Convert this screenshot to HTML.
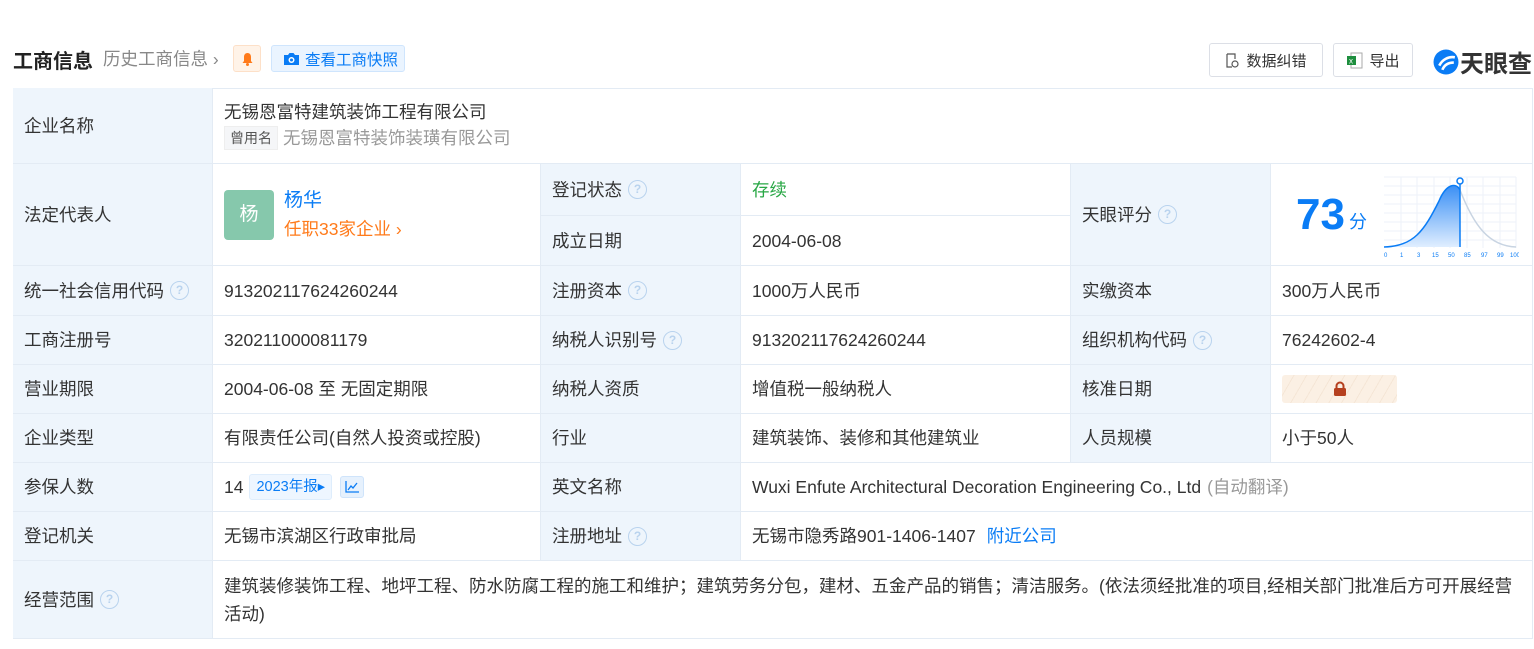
<!DOCTYPE html>
<html><head><meta charset="utf-8"><style>
*{margin:0;padding:0;box-sizing:border-box}
body{width:1534px;height:649px;background:#fff;font-family:"Liberation Sans","Noto Sans CJK SC",sans-serif;color:#333;position:relative;overflow:hidden}
.c{position:absolute;border-right:1px solid #e3ebf4;border-bottom:1px solid #e3ebf4;font-size:17.5px;line-height:22px;display:flex;align-items:center;padding-left:11px;white-space:nowrap}
.c>span,.c>div{line-height:22px}
.l{background:#eef5fc}
.q{display:inline-block;width:19px;height:19px;border:1.5px solid #b9d3ee;border-radius:50%;color:#b9d3ee;font-size:12px;text-align:center;line-height:16px!important;margin-left:6px;font-weight:bold}
.btn{position:absolute;top:43px;height:34px;border:1px solid #dcdfe6;border-radius:3px;font-size:15px;display:flex;align-items:center;justify-content:center;color:#333}
</style></head><body>
<div style="position:absolute;left:13px;top:45px;font-size:20px;font-weight:bold;color:#222">工商信息</div>
<div style="position:absolute;left:103px;top:46px;font-size:17.5px;color:#888">历史工商信息 ›</div>
<div style="position:absolute;left:233px;top:45px;width:28px;height:27px;background:#fff3e8;border:1px solid #fde0c8;border-radius:3px;display:flex;align-items:center;justify-content:center"><svg width="13" height="14" viewBox="0 0 13 14"><path d="M6.5 1C4 1 3 3 3 5v4L1.5 11h10L10 9V5c0-2-1-4-3.5-4z" fill="#ff7a1a"/><circle cx="6.5" cy="12.5" r="1.5" fill="#ff7a1a"/></svg></div>
<div style="position:absolute;left:271px;top:45px;width:134px;height:27px;background:#eaf4ff;border:1px solid #cfe5fd;border-radius:3px;font-size:15.5px;color:#0a7cf5;display:flex;align-items:center;padding-left:11px"><svg width="17" height="14" viewBox="0 0 17 14" style="margin-right:5px"><path d="M1 3h4l1.5-2h4L12 3h4v10H1z" fill="#0a7cf5"/><circle cx="8.5" cy="8" r="3" fill="#fff"/><circle cx="8.5" cy="8" r="1.5" fill="#0a7cf5"/></svg>查看工商快照</div>
<div class="btn" style="left:1209px;width:114px"><svg width="14" height="15" viewBox="0 0 14 15" style="margin-right:7px"><path d="M2 1h8v5M2 1v13h5" fill="none" stroke="#555" stroke-width="1.2"/><circle cx="10" cy="11" r="3" fill="none" stroke="#555" stroke-width="1.2"/></svg>数据纠错</div>
<div class="btn" style="left:1333px;width:80px"><svg width="17" height="17" viewBox="0 0 17 17" style="margin-right:6px"><rect x="5" y="1" width="11" height="15" fill="#fff" stroke="#aaa"/><rect x="1" y="4" width="9" height="9" fill="#1e8e3e"/><text x="3" y="11.5" font-size="8" fill="#fff" font-family="Liberation Sans">x</text></svg>导出</div>
<div style="position:absolute;left:1433px;top:44px;display:flex;align-items:center"><svg width="26" height="26" viewBox="0 0 25 25"><circle cx="12.5" cy="12.5" r="12" fill="#0a7cf5"/><path d="M6 16c3-6 9-9 15-8M9 20c2-5 6-7 11-7" stroke="#fff" stroke-width="2.5" fill="none"/></svg><span style="font-size:24px;font-weight:bold;color:#333;margin-left:1px">天眼查</span></div>

<div style="position:absolute;left:13px;top:88px;width:1520px;height:551px;border-top:1px solid #e3ebf4;border-left:1px solid #e3ebf4"></div>
<div class="c l" style="left:13px;top:88px;width:200px;height:76px">企业名称</div>
<div class="c" style="left:213px;top:88px;width:1320px;height:76px;display:block;padding-top:13px">无锡恩富特建筑装饰工程有限公司<div style="margin-top:3px;color:#999"><span style="display:inline-block;background:#f5f6f8;border:1px solid #eee;color:#555;font-size:14px;line-height:20px;padding:1px 5px;margin-right:5px;vertical-align:1px">曾用名</span>无锡恩富特装饰装璜有限公司</div></div>
<div class="c l" style="left:13px;top:164px;width:200px;height:102px">法定代表人</div>
<div class="c" style="left:213px;top:164px;width:328px;height:102px"><div style="width:50px;height:50px;background:#86c8ac;border-radius:4px;color:#fff;font-size:19px;display:flex;align-items:center;justify-content:center">杨</div><div style="margin-left:10px;line-height:28px"><div style="color:#0a7cf5;font-size:19px">杨华</div><div style="color:#ff7a1a">任职33家企业 ›</div></div></div>
<div class="c l" style="left:541px;top:164px;width:200px;height:52px"><span>登记状态</span><span class="q">?</span></div>
<div class="c" style="left:741px;top:164px;width:330px;height:52px;color:#28a745"><span>存续</span></div>
<div class="c l" style="left:541px;top:216px;width:200px;height:50px"><span>成立日期</span></div>
<div class="c" style="left:741px;top:216px;width:330px;height:50px"><span>2004-06-08</span></div>
<div class="c l" style="left:1071px;top:164px;width:200px;height:102px"><span>天眼评分</span><span class="q">?</span></div>
<div class="c" style="left:1271px;top:164px;width:262px;height:102px"><span style="font-size:44px;line-height:50px;font-weight:bold;color:#0a7cf5;margin-left:14px">73</span><span style="color:#0a7cf5;font-size:18px;margin:14px 0 0 4px">分</span>
<svg style="position:absolute;left:113px;top:12px" width="135" height="86" viewBox="0 0 135 86"><defs><linearGradient id="g" x1="0" y1="0" x2="0" y2="1"><stop offset="0" stop-color="#3a8ff5"/><stop offset="1" stop-color="#e0eeff"/></linearGradient></defs><g stroke="#eef2f8"><path d="M0 1h132M0 10h132M0 19h132M0 28h132M0 37h132M0 46h132M0 55h132M0 64h132M17 1v71M33 1v71M50 1v71M66 1v71M83 1v71M99 1v71M116 1v71M132 1v71"/></g><path d="M0 71C30 70 40 55 55 25C62 8 72 6 76 14L76 71Z" fill="url(#g)"/><path d="M0 71C30 70 40 55 55 25C62 8 72 6 76 14" stroke="#0a7cf5" fill="none" stroke-width="1.5"/><path d="M76 14C90 50 105 70 132 71" stroke="#c8d4e2" fill="none" stroke-width="1.5"/><path d="M76 5v66" stroke="#0a7cf5" stroke-width="1.5"/><circle cx="76" cy="5" r="3" fill="#fff" stroke="#0a7cf5" stroke-width="1.5"/><g font-size="6" fill="#0a7cf5" font-family="Liberation Sans"><text x="0" y="81">0</text><text x="16" y="81">1</text><text x="33" y="81">3</text><text x="48" y="81">15</text><text x="64" y="81">50</text><text x="80" y="81">85</text><text x="97" y="81">97</text><text x="113" y="81">99</text><text x="126" y="81">100</text></g></svg></div>

<div class="c l" style="left:13px;top:266px;width:200px;height:50px"><span>统一社会信用代码</span><span class="q">?</span></div>
<div class="c" style="left:213px;top:266px;width:328px;height:50px"><span>913202117624260244</span></div>
<div class="c l" style="left:541px;top:266px;width:200px;height:50px"><span>注册资本</span><span class="q">?</span></div>
<div class="c" style="left:741px;top:266px;width:330px;height:50px"><span>1000万人民币</span></div>
<div class="c l" style="left:1071px;top:266px;width:200px;height:50px"><span>实缴资本</span></div>
<div class="c" style="left:1271px;top:266px;width:262px;height:50px"><span>300万人民币</span></div>

<div class="c l" style="left:13px;top:316px;width:200px;height:49px"><span>工商注册号</span></div>
<div class="c" style="left:213px;top:316px;width:328px;height:49px"><span>320211000081179</span></div>
<div class="c l" style="left:541px;top:316px;width:200px;height:49px"><span>纳税人识别号</span><span class="q">?</span></div>
<div class="c" style="left:741px;top:316px;width:330px;height:49px"><span>913202117624260244</span></div>
<div class="c l" style="left:1071px;top:316px;width:200px;height:49px"><span>组织机构代码</span><span class="q">?</span></div>
<div class="c" style="left:1271px;top:316px;width:262px;height:49px"><span>76242602-4</span></div>

<div class="c l" style="left:13px;top:365px;width:200px;height:49px"><span>营业期限</span></div>
<div class="c" style="left:213px;top:365px;width:328px;height:49px"><span>2004-06-08 至 无固定期限</span></div>
<div class="c l" style="left:541px;top:365px;width:200px;height:49px"><span>纳税人资质</span></div>
<div class="c" style="left:741px;top:365px;width:330px;height:49px"><span>增值税一般纳税人</span></div>
<div class="c l" style="left:1071px;top:365px;width:200px;height:49px"><span>核准日期</span></div>
<div class="c" style="left:1271px;top:365px;width:262px;height:49px"><div style="width:115px;height:28px;border-radius:3px;background:repeating-linear-gradient(120deg,#fbf0e4 0 10px,#f5e6d6 10px 11px);display:flex;align-items:center;justify-content:center"><svg width="14" height="16" viewBox="0 0 14 16"><path d="M3.5 7V5a3.5 3.5 0 0 1 7 0v2" stroke="#b5401f" stroke-width="2" fill="none"/><rect x="1" y="7" width="12" height="8" rx="1.5" fill="#b5401f"/></svg></div></div>

<div class="c l" style="left:13px;top:414px;width:200px;height:49px"><span>企业类型</span></div>
<div class="c" style="left:213px;top:414px;width:328px;height:49px"><span>有限责任公司(自然人投资或控股)</span></div>
<div class="c l" style="left:541px;top:414px;width:200px;height:49px"><span>行业</span></div>
<div class="c" style="left:741px;top:414px;width:330px;height:49px"><span>建筑装饰、装修和其他建筑业</span></div>
<div class="c l" style="left:1071px;top:414px;width:200px;height:49px"><span>人员规模</span></div>
<div class="c" style="left:1271px;top:414px;width:262px;height:49px"><span>小于50人</span></div>

<div class="c l" style="left:13px;top:463px;width:200px;height:49px"><span>参保人数</span></div>
<div class="c" style="left:213px;top:463px;width:328px;height:49px"><span>14</span><span style="margin-left:6px;background:#eef6ff;border:1px solid #deedfc;border-radius:3px;color:#0a7cf5;font-size:14.5px;line-height:20px;padding:2px 6px">2023年报▸</span><span style="margin-left:8px;width:24px;height:22px;background:#e6f1fd;border:1px solid #cfe4fb;border-radius:3px;display:inline-flex;align-items:center;justify-content:center"><svg width="14" height="12" viewBox="0 0 14 12"><path d="M1 0v11h13M3 9l3-4 2 2 4-5" stroke="#0a7cf5" fill="none" stroke-width="1.3"/></svg></span></div>
<div class="c l" style="left:541px;top:463px;width:200px;height:49px"><span>英文名称</span></div>
<div class="c" style="left:741px;top:463px;width:792px;height:49px"><span>Wuxi Enfute Architectural Decoration Engineering Co., Ltd</span><span style="color:#999;margin-left:6px">(自动翻译)</span></div>

<div class="c l" style="left:13px;top:512px;width:200px;height:49px"><span>登记机关</span></div>
<div class="c" style="left:213px;top:512px;width:328px;height:49px"><span>无锡市滨湖区行政审批局</span></div>
<div class="c l" style="left:541px;top:512px;width:200px;height:49px"><span>注册地址</span><span class="q">?</span></div>
<div class="c" style="left:741px;top:512px;width:792px;height:49px"><span>无锡市隐秀路901-1406-1407</span><span style="color:#0a7cf5;margin-left:11px">附近公司</span></div>

<div class="c l" style="left:13px;top:561px;width:200px;height:78px"><span>经营范围</span><span class="q">?</span></div>
<div class="c" style="left:213px;top:561px;width:1320px;height:78px;padding-right:10px;white-space:normal"><span style="line-height:28px">建筑装修装饰工程、地坪工程、防水防腐工程的施工和维护；建筑劳务分包，建材、五金产品的销售；清洁服务。(依法须经批准的项目,经相关部门批准后方可开展经营活动)</span></div>
</body></html>
